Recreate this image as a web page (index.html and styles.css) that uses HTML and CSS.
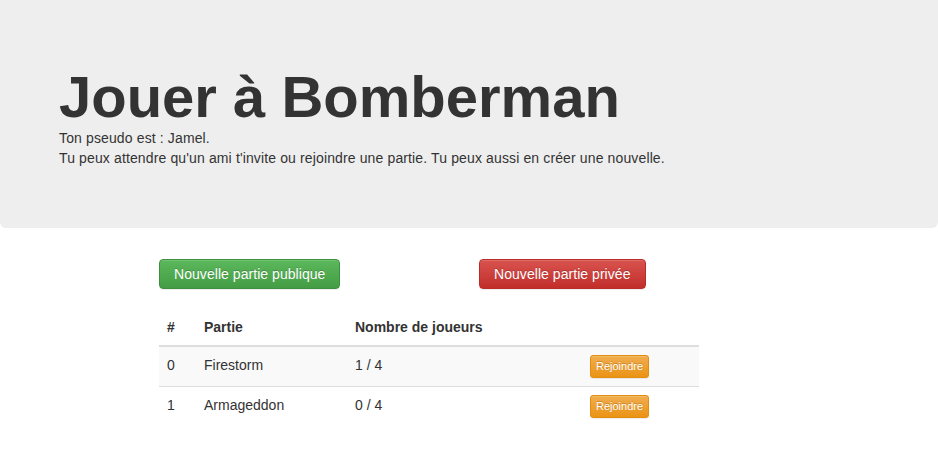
FILE: index.html
```html
<!DOCTYPE html>
<html lang="fr">
<head>
<meta charset="utf-8">
<title>Jouer à Bomberman</title>
<link rel="stylesheet" href="styles.css">
</head>
<body>
<header class="jumbotron">
  <h1 class="title">Jouer à Bomberman</h1>
  <p class="intro">Ton pseudo est : Jamel.<br>Tu peux attendre qu'un ami t'invite ou rejoindre une partie. Tu peux aussi en créer une nouvelle.</p>
</header>
<main class="main">
  <div class="actions">
    <div class="action-col"><button class="btn btn-success">Nouvelle partie publique</button></div>
    <div class="action-col"><button class="btn btn-danger">Nouvelle partie privée</button></div>
  </div>
  <table class="games">
    <thead>
      <tr><th class="c-id">#</th><th class="c-name">Partie</th><th class="c-count">Nombre de joueurs</th><th class="c-act"></th></tr>
    </thead>
    <tbody>
      <tr class="striped"><td>0</td><td>Firestorm</td><td>1 / 4</td><td><button class="btn-xs">Rejoindre</button></td></tr>
      <tr><td>1</td><td>Armageddon</td><td>0 / 4</td><td><button class="btn-xs">Rejoindre</button></td></tr>
    </tbody>
  </table>
</main>
</body>
</html>
```
FILE: styles.css
```css
html, body {
  margin: 0;
  padding: 0;
}
body {
  font-family: "Liberation Sans", Arial, sans-serif;
  font-size: 14px;
  line-height: 20px;
  color: #333;
  background: #fff;
}
.jumbotron {
  background: #eee;
  height: 228px;
  box-sizing: border-box;
  padding: 66px 20px 0 59px;
  border-radius: 0 0 6px 6px;
}
.title {
  margin: 0;
  font-size: 58px;
  line-height: 62px;
  font-weight: bold;
  color: #333;
}
.intro {
  margin: 0;
  font-size: 14px;
  line-height: 20px;
  letter-spacing: 0.13px;
}
.main {
  padding: 31px 0 0 159px;
}
.actions {
  display: grid;
  grid-template-columns: 320px 320px;
  margin-bottom: 20px;
}
.btn {
  font-family: "Liberation Sans", Arial, sans-serif;
  font-size: 14px;
  line-height: 20px;
  padding: 4px 14px;
  border-radius: 4px;
  border: 1px solid;
  color: #fff;
  letter-spacing: 0.05px;
  text-shadow: 0 -1px 0 rgba(0,0,0,.2);
  box-shadow: inset 0 1px 0 rgba(255,255,255,.15), 0 1px 1px rgba(0,0,0,.075);
  cursor: pointer;
}
.btn-success {
  background: linear-gradient(to bottom, #5cb85c 0, #449d44 100%);
  border-color: #3e8f3e;
}
.btn-danger {
  background: linear-gradient(to bottom, #d9534f 0, #c12e2a 100%);
  border-color: #b92c28;
}
.btn-xs {
  font-family: "Liberation Sans", Arial, sans-serif;
  font-size: 11px;
  line-height: 19px;
  padding: 1px 5px;
  border-radius: 3px;
  border: 1px solid #e38d13;
  color: #fff;
  background: linear-gradient(to bottom, #f0ad4e 0, #eb9316 100%);
  text-shadow: 0 -1px 0 rgba(0,0,0,.2);
  box-shadow: inset 0 1px 0 rgba(255,255,255,.15), 0 1px 1px rgba(0,0,0,.075);
  cursor: pointer;
  display: block;
}
.games {
  width: 540px;
  border-collapse: collapse;
  border-spacing: 0;
}
.games th, .games td {
  padding: 8px;
  text-align: left;
  vertical-align: top;
}
.games th {
  font-weight: bold;
  border-bottom: 2px solid #ddd;
}
.games td {
  border-top: 1px solid #ddd;
}
.games tbody tr:first-child td {
  border-top: 0;
}
.games tr.striped td {
  background: #f9f9f9;
}
.c-id { width: 21px; }
.c-name { width: 135px; }
.c-count { width: 219px; }
```
